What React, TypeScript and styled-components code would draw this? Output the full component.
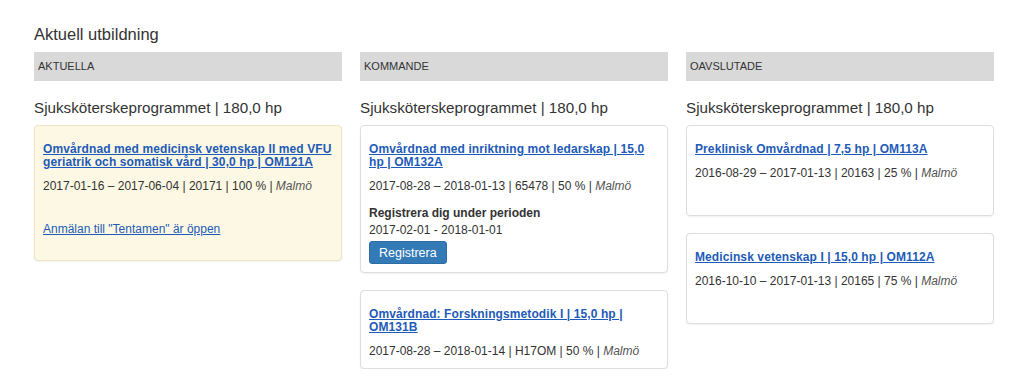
import React from "react";
import styled, { createGlobalStyle } from "styled-components";

const GlobalStyle = createGlobalStyle`
  body {
    margin: 0;
    background: #fff;
    font-family: "Liberation Sans", Arial, sans-serif;
    color: #333;
  }
`;

type Course = {
  title: string;
  meta: string;
  place: string;
  register?: { period: string };
  notice?: string;
  spacer?: boolean;
};

type Column = {
  label: string;
  highlight?: boolean;
  courses: Course[];
};

const columns: Column[] = [
  {
    label: "Aktuella",
    highlight: true,
    courses: [
      {
        title:
          "Omvårdnad med medicinsk vetenskap II med VFU geriatrik och somatisk vård | 30,0 hp | OM121A",
        meta: "2017-01-16 – 2017-06-04 | 20171 | 100 % | ",
        place: "Malmö",
        notice: 'Anmälan till "Tentamen" är öppen',
      },
    ],
  },
  {
    label: "Kommande",
    courses: [
      {
        title: "Omvårdnad med inriktning mot ledarskap | 15,0 hp | OM132A",
        meta: "2017-08-28 – 2018-01-13 | 65478 | 50 % | ",
        place: "Malmö",
        register: { period: "2017-02-01 - 2018-01-01" },
      },
      {
        title: "Omvårdnad: Forskningsmetodik I | 15,0 hp | OM131B",
        meta: "2017-08-28 – 2018-01-14 | H17OM | 50 % | ",
        place: "Malmö",
      },
    ],
  },
  {
    label: "Oavslutade",
    courses: [
      {
        title: "Preklinisk Omvårdnad | 7,5 hp | OM113A",
        meta: "2016-08-29 – 2017-01-13 | 20163 | 25 % | ",
        place: "Malmö",
        spacer: true,
      },
      {
        title: "Medicinsk vetenskap I | 15,0 hp | OM112A",
        meta: "2016-10-10 – 2017-01-13 | 20165 | 75 % | ",
        place: "Malmö",
        spacer: true,
      },
    ],
  },
];

export default function App() {
  return (
    <>
      <GlobalStyle />
      <Page>
        <Title>Aktuell utbildning</Title>
        <Columns>
          {columns.map((col) => (
            <Col key={col.label}>
              <ColHeader>{col.label}</ColHeader>
              <Program>Sjuksköterskeprogrammet | 180,0 hp</Program>
              <CardList>
                {col.courses.map((c) => (
                  <Card key={c.title} $highlight={col.highlight}>
                    <CourseLink href="#">{c.title}</CourseLink>
                    <Meta>
                      {c.meta}
                      <em>{c.place}</em>
                    </Meta>
                    {c.register && (
                      <Register>
                        <RegisterLabel>Registrera dig under perioden</RegisterLabel>
                        <Meta as="div">{c.register.period}</Meta>
                        <Button type="button">Registrera</Button>
                      </Register>
                    )}
                    {c.notice && <Notice href="#">{c.notice}</Notice>}
                    {c.spacer && <Spacer />}
                  </Card>
                ))}
              </CardList>
            </Col>
          ))}
        </Columns>
      </Page>
    </>
  );
}

const Page = styled.div`
  padding: 24px 30px 0 34px;
`;

const Title = styled.h1`
  margin: 0 0 8px;
  font-size: 16.5px;
  line-height: 20px;
  font-weight: normal;
  color: #333;
`;

const Columns = styled.div`
  display: grid;
  grid-template-columns: repeat(3, 308px);
  column-gap: 18px;
`;

const Col = styled.section`
  display: flex;
  flex-direction: column;
`;

const ColHeader = styled.div`
  height: 29px;
  line-height: 29px;
  padding-left: 4px;
  background: #d9d9d9;
  font-size: 11px;
  text-transform: uppercase;
  color: #333;
`;

const Program = styled.h2`
  margin: 17px 0 7px;
  font-size: 15.2px;
  line-height: 20px;
  font-weight: normal;
  color: #333;
`;

const CardList = styled.div`
  display: flex;
  flex-direction: column;
  gap: 17px;
`;

const Card = styled.div<{ $highlight?: boolean }>`
  display: flex;
  flex-direction: column;
  align-items: flex-start;
  padding: 17px 8px 8px;
  border: 1px solid ${(p) => (p.$highlight ? "#f0e3c4" : "#dedede")};
  border-radius: 4px;
  background: ${(p) => (p.$highlight ? "#fcf8e3" : "#fff")};
  box-shadow: 0 1px 2px rgba(0, 0, 0, 0.06);
`;

const CourseLink = styled.a`
  font-size: 12px;
  line-height: 13px;
  font-weight: bold;
  color: #1e5bb8;
  text-decoration: underline;
  letter-spacing: 0.1px;
`;

const Meta = styled.p`
  margin: 9px 0 0;
  font-size: 12px;
  line-height: 17px;
  color: #333;

  em {
    color: #555;
  }
`;

const Register = styled.div`
  display: flex;
  flex-direction: column;
  align-items: flex-start;
  margin-top: 10px;

  ${Meta} {
    margin: 0;
  }
`;

const RegisterLabel = styled.div`
  font-size: 12px;
  line-height: 17px;
  font-weight: bold;
  color: #333;
`;

const Button = styled.button`
  margin-top: 2px;
  height: 23px;
  padding: 0 9px;
  border: 1px solid #2e6da4;
  border-radius: 3px;
  background: #337ab7;
  color: #fff;
  font-family: "Liberation Sans", Arial, sans-serif;
  font-size: 12.5px;
  cursor: pointer;
`;

const Notice = styled.a`
  margin: 26px 0 14px;
  font-size: 12px;
  line-height: 17px;
  color: #1e5bb8;
  text-decoration: underline;
`;

const Spacer = styled.div`
  height: 25px;
`;
